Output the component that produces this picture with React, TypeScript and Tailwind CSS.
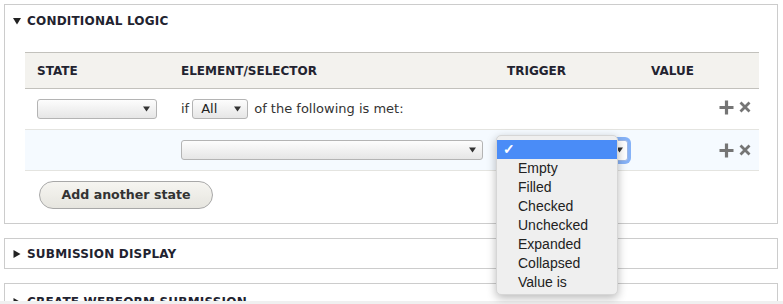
import React from "react";

const ui = "font-['DejaVu_Sans',sans-serif]";

function Arrow({ className = "" }: { className?: string }) {
  return (
    <svg width="7" height="6" viewBox="0 0 7 6" className={className}>
      <path d="M0 0.5 H7 L3.5 5.5 Z" fill="#333" />
    </svg>
  );
}

function FakeSelect({ w, label }: { w: string; label?: string }) {
  return (
    <div
      className={`${w} h-5 flex items-center justify-between rounded-[3px] border border-[#b4b4b4] bg-gradient-to-b from-[#fdfdfd] to-[#e6e6e6] pl-2 pr-[6px] text-[13px] text-[#222]`}>
      <span>{label}</span>
      <Arrow />
    </div>
  );
}

function Ops() {
  return (
    <div className="flex items-center gap-[5px]">
      <svg width="15" height="15" viewBox="0 0 15 15">
        <path d="M7.5 0.5 V14.5 M0.5 7.5 H14.5" stroke="#757575" strokeWidth="3.2" />
      </svg>
      <svg width="12" height="12" viewBox="0 0 12 12">
        <path d="M1.5 1.5 L10.5 10.5 M10.5 1.5 L1.5 10.5" stroke="#757575" strokeWidth="2.8" />
      </svg>
    </div>
  );
}

function Legend({ open, text }: { open: boolean; text: string }) {
  return (
    <div className="flex items-center gap-[6px] pl-2 text-[12px] font-bold tracking-[0.2px] text-[#222330]">
      <svg width="8" height="8" viewBox="0 0 8 8">
        {open ? <path d="M0 1 H8 L4 7.5 Z" fill="#222" /> : <path d="M0.5 0 V8 L7.5 4 Z" fill="#222" />}
      </svg>
      <span>{text}</span>
    </div>
  );
}

const options = ["Empty", "Filled", "Checked", "Unchecked", "Expanded", "Collapsed", "Value is"];

export default function App() {
  return (
    <div className={`relative w-[783px] h-[304px] overflow-hidden bg-white ${ui}`}>
      <div className="h-[301px] overflow-hidden pl-1 pr-[5px] pt-1 flex flex-col gap-[14px]">
        {/* conditional logic */}
        <div className="h-[220px] shrink-0 border border-[#cccccc] flex flex-col">
          <div className="h-[47px] pt-[7px]">
            <Legend open text="CONDITIONAL LOGIC" />
          </div>
          <div className="ml-5 mr-[18px]">
            <div className="h-[37px] flex items-center border-t border-b border-[#c2c1bc] bg-[#f3f2ee] text-[12px] font-bold text-[#222330]">
              <div className="w-[144px] pl-3">STATE</div>
              <div className="w-[326px] pl-3">ELEMENT/SELECTOR</div>
              <div className="w-[144px] pl-3">TRIGGER</div>
              <div className="pl-3">VALUE</div>
            </div>
            <div className="h-[41px] flex items-center border-b border-[#e4e4e0] text-[13px] text-[#333]">
              <div className="w-[144px] pl-3">
                <FakeSelect w="w-[120px]" />
              </div>
              <div className="w-[326px] pl-3 flex items-center gap-[3px]">
                <span>if</span>
                <FakeSelect w="w-[56px]" label="All" />
                <span className="ml-[3px]">of the following is met:</span>
              </div>
              <div className="flex-1" />
              <div className="pr-2 pb-1">
                <Ops />
              </div>
            </div>
            <div className="h-[41px] flex items-center border-b border-[#e4e4e0] bg-[#f5faff]">
              <div className="w-[144px]" />
              <div className="w-[326px] pl-3">
                <FakeSelect w="w-[302px]" />
              </div>
              <div className="w-[144px] pl-3">
                <div className="w-[121px] h-[21px] flex items-center justify-end rounded-[3px] border border-[#9fb9e6] bg-white pr-[4px] shadow-[0_0_0_3px_#86b2f7]">
                  <Arrow />
                </div>
              </div>
              <div className="flex-1" />
              <div className="pr-2">
                <Ops />
              </div>
            </div>
          </div>
          <div className="pl-[34px] pt-[10px]">
            <button className="h-[28px] w-[174px] rounded-full border border-[#a8a8a8] bg-gradient-to-b from-[#f6f5f1] to-[#e6e5df] text-[12.6px] font-bold text-[#333]">
              Add another state
            </button>
          </div>
        </div>

        {/* submission display */}
        <div className="h-[31px] shrink-0 border border-[#cccccc] flex items-center">
          <Legend open={false} text="SUBMISSION DISPLAY" />
        </div>

        {/* create webform submission */}
        <div className="h-[40px] shrink-0 border border-[#cccccc] pt-[9px]">
          <Legend open={false} text="CREATE WEBFORM SUBMISSION" />
        </div>
      </div>
      <div className="h-[3px] bg-[#f0f0f0]" />

      {/* native select popup */}
      <div className="absolute left-[496px] top-[135px] w-[122px] h-[160px] rounded-[5px] border border-[#d6d6d6] bg-[#efefef] py-1 shadow-[0_3px_10px_rgba(0,0,0,0.28)] font-['Liberation_Sans',sans-serif] text-[14px] text-[#222]">
        <div className="h-[19px] flex items-center bg-[#4a8cf7] pl-[6px] text-white text-[14px] font-bold">✓</div>
        {options.map((o) => (
          <div key={o} className="h-[19px] flex items-center pl-[21px]">
            {o}
          </div>
        ))}
      </div>
    </div>
  );
}
